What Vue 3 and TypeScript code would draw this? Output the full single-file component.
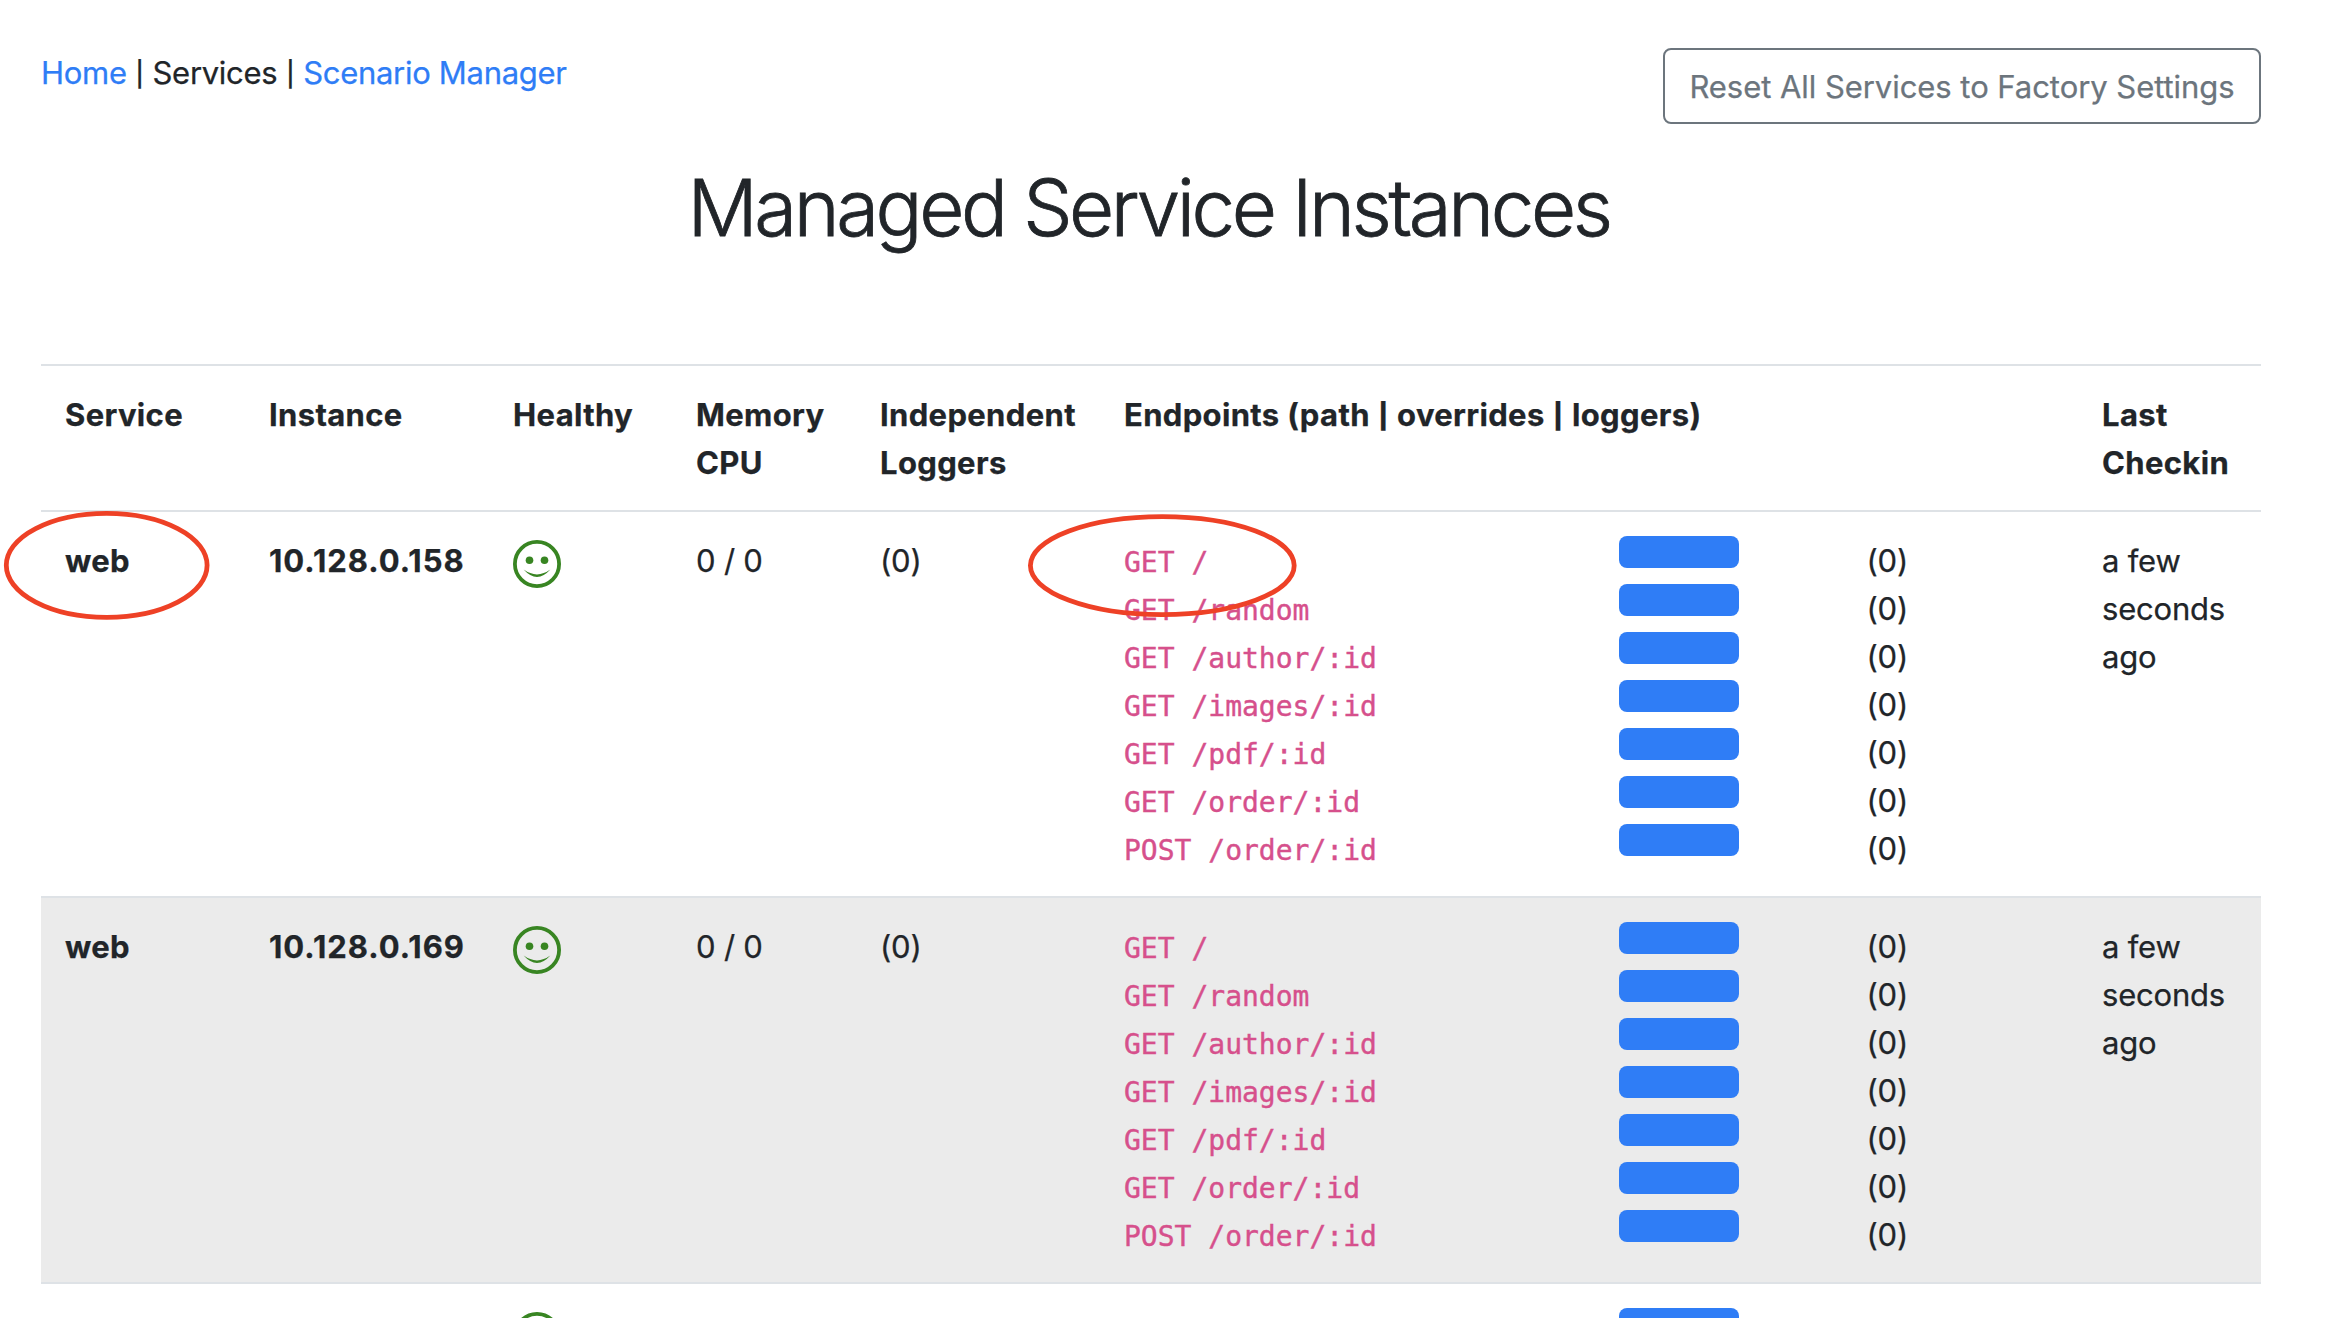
<script setup lang="ts">
interface Instance {
  service: string
  address: string
  load: string
  loggers: string
  checkin: string
  endpoints: { path: string; loggers: string }[]
}

const paths: string[] = [
  'GET /',
  'GET /random',
  'GET /author/:id',
  'GET /images/:id',
  'GET /pdf/:id',
  'GET /order/:id',
  'POST /order/:id',
]

const makeInstance = (address: string): Instance => ({
  service: 'web',
  address,
  load: '0 / 0',
  loggers: '(0)',
  checkin: 'a few seconds ago',
  endpoints: paths.map((path) => ({ path, loggers: '(0)' })),
})

const instances: Instance[] = [
  makeInstance('10.128.0.158'),
  makeInstance('10.128.0.169'),
  { service: '', address: '', load: '', loggers: '', checkin: '', endpoints: [{ path: '', loggers: '' }] },
]
</script>

<template>
  <div class="page">
    <header class="top">
      <nav class="nav"><a class="link">Home</a> <span class="pipe">|</span> Services <span class="pipe">|</span> <a class="link">Scenario Manager</a></nav>
      <button class="reset" type="button"><span>Reset All Services to Factory Settings</span></button>
    </header>

    <h1 class="title"><span>Managed Service Instances</span></h1>

    <div class="table">
      <div class="row head">
        <div class="cell"><span>Service</span></div>
        <div class="cell"><span>Instance</span></div>
        <div class="cell"><span>Healthy</span></div>
        <div class="cell"><span>Memory<br />CPU</span></div>
        <div class="cell"><span>Independent<br />Loggers</span></div>
        <div class="cell">Endpoints (path <span class="pipe">|</span> overrides <span class="pipe">|</span> loggers)</div>
        <div class="cell"><span>Last<br />Checkin</span></div>
      </div>

      <div v-for="(item, i) in instances" :key="i" class="row" :class="{ striped: i % 2 === 1 }">
        <div class="cell strong">{{ item.service }}</div>
        <div class="cell strong address">{{ item.address }}</div>
        <div class="cell icon">
          <svg class="smile" width="48" height="48" viewBox="0 0 48 48">
            <circle cx="24" cy="24" r="22.1" fill="none" stroke="#388522" stroke-width="3.8" />
            <circle cx="16.5" cy="20.3" r="3.8" fill="#388522" />
            <circle cx="31.5" cy="20.3" r="3.8" fill="#388522" />
            <path d="M10.6 29.6 Q24 44.4 37.4 29.6 Q24 39.2 10.6 29.6Z" fill="#388522" />
          </svg>
        </div>
        <div class="cell">{{ item.load }}</div>
        <div class="cell">{{ item.loggers }}</div>
        <div class="cell endpoints">
          <div v-for="(endpoint, j) in item.endpoints" :key="j" class="endpoint">
            <code class="path">{{ endpoint.path }}</code>
            <div class="override"><div class="bar"></div></div>
            <div class="count">{{ endpoint.loggers }}</div>
          </div>
        </div>
        <div class="cell checkin">{{ item.checkin }}</div>
      </div>
    </div>

    <svg class="marks" width="2342" height="1318" viewBox="0 0 2342 1318">
      <ellipse cx="106.7" cy="565.3" rx="100.4" ry="52" />
      <ellipse cx="1162.3" cy="565.6" rx="131.9" ry="49" />
    </svg>
  </div>
</template>

<style>
body {
  background: #fff;
  overflow: hidden;
}
</style>

<style scoped>
.page {
  position: relative;
  box-sizing: border-box;
  width: 2342px;
  height: 1318px;
  padding: 48px 81px 0 41px;
  overflow: hidden;
  color: #212529;
  font-family: Inter, "Liberation Sans", sans-serif;
  font-size: 31px;
  line-height: 48px;
  letter-spacing: -0.2px;
  -webkit-text-stroke: 0.25px currentColor;
}

.top {
  display: flex;
  justify-content: space-between;
  align-items: flex-start;
}

.nav {
  padding-top: 1px;
  letter-spacing: -0.3px;
}

.pipe {
  display: inline-block;
  transform: translateY(1px) scaleY(0.8);
}

.nav .pipe {
  margin: 0 -0.5px;
}

.link {
  color: #2f7df6;
}

.reset {
  box-sizing: border-box;
  width: 598px;
  height: 76px;
  padding: 2px 0 0;
  border: 2px solid #6c757d;
  border-radius: 8px;
  background: transparent;
  color: #6c757d;
  font: inherit;
  letter-spacing: -0.05px;
  white-space: nowrap;
}

.title {
  height: 96px;
  margin: 36px 0 108px;
  padding-right: 5px;
  font-size: 78px;
  line-height: 96px;
  font-weight: 350;
  letter-spacing: -3.4px;
  text-align: center;
  -webkit-text-stroke: 0.8px currentColor;
}

.row {
  display: grid;
  grid-template-columns: 204px 244px 183px 184px 244px 978px 183px;
  border-top: 2px solid #dee2e6;
}

.head,
.strong {
  font-weight: 700;
  letter-spacing: 0.35px;
}

.address {
  letter-spacing: 1px;
}

.striped {
  background: #ebebeb;
}

.cell {
  padding: 25px 24px 23px;
  min-width: 0;
}

.icon,
.endpoints {
  padding: 24px;
}

.count {
  padding-top: 1px;
}

.head .cell {
  white-space: nowrap;
}

.smile {
  display: block;
  margin-top: 4px;
}

.endpoint {
  display: grid;
  grid-template-columns: 495px 247.5px 247.5px;
  width: 990px;
  height: 48px;
}

.path {
  padding-top: 3px;
  color: #d6508c;
  font-family: "DejaVu Sans Mono", monospace;
  font-size: 28px;
  letter-spacing: 0;
  -webkit-text-stroke: 0.4px #d6508c;
}

.bar {
  width: 120px;
  height: 32px;
  border-radius: 8px;
  background: #2f7df6;
}

.marks {
  position: absolute;
  left: 0;
  top: 0;
  fill: none;
  stroke: #ee4126;
  stroke-width: 4.8;
}
</style>
